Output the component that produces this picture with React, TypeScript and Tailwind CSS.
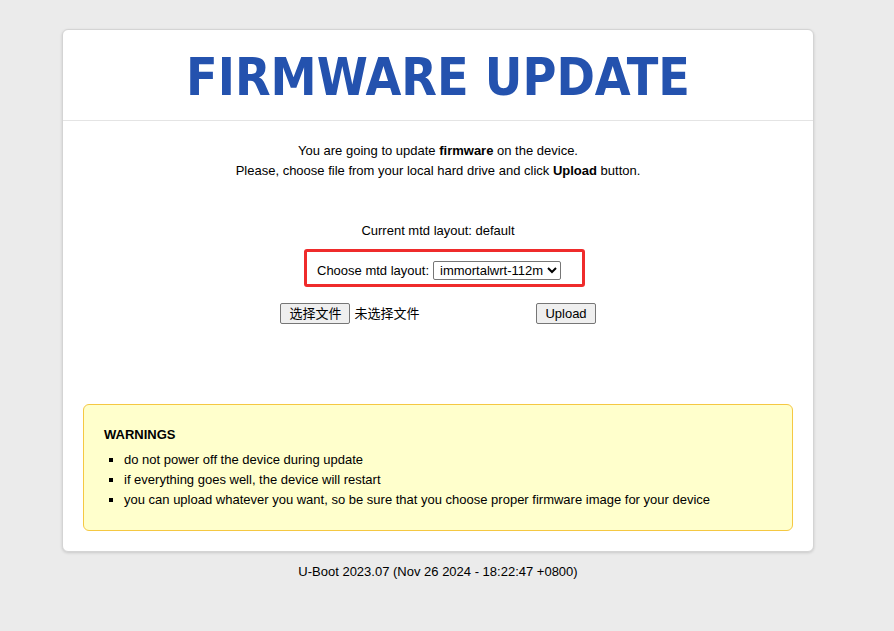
export default function App() {
  return (
    <div className="min-h-screen bg-[#ebebeb] pt-[29px] font-['Liberation_Sans','Noto_Sans_CJK_SC',sans-serif] text-[13px] text-black">
      <div className="flex w-[876px] flex-col items-center">
        {/* main card */}
        <div className="w-[752px] rounded-[6px] border border-[#d4d4d4] bg-white shadow-[0_1px_3px_rgba(0,0,0,0.15)]">
          <div className="flex h-[91px] items-center justify-center border-b border-[#e4e4e4]">
            <h1 className="pt-[5px] font-['DejaVu_Sans_Condensed','DejaVu_Sans',sans-serif] text-[51.5px] leading-none font-bold text-[#2452ae]">
              FIRMWARE UPDATE
            </h1>
          </div>

          <div className="px-[20px] pt-[20px] pb-[20px]">
            <div className="text-center leading-[20px]">
              <p>
                You are going to update <b>firmware</b> on the device.
              </p>
              <p>
                Please, choose file from your local hard drive and click <b>Upload</b> button.
              </p>
            </div>

            <p className="mt-[40px] text-center leading-[20px]">Current mtd layout: default</p>

            <div className="mt-[8px] flex justify-center pl-[13px]">
              <div className="flex h-[38px] w-[281px] items-center rounded-[3px] border-[3px] border-[#ef2b2b] pt-[5px] pl-[10px]">
                <span>Choose mtd layout:</span>
                <select className="ml-[4px] h-[19px] w-[128px] rounded-[2px] border border-[#767676] bg-white pl-[2px] text-[13px]">
                  <option>immortalwrt-112m</option>
                </select>
              </div>
            </div>

            <div className="mt-[16px] flex justify-center">
              <div className="flex w-[256px] items-center">
                <button className="h-[21px] rounded-[2px] border border-[#767676] bg-[#efefef] px-[8px] text-[13px]">
                  选择文件
                </button>
                <span className="ml-[4px]">未选择文件</span>
              </div>
              <button className="h-[21px] rounded-[2px] border border-[#767676] bg-[#efefef] px-[8px] text-[13px]">
                Upload
              </button>
            </div>

            {/* warnings */}
            <div className="mt-[80px] h-[127px] rounded-[6px] border border-[#f5c842] bg-[#ffffcc] px-[20px] pt-[20px]">
              <p className="font-bold leading-[20px]">WARNINGS</p>
              <ul className="mt-[5px] list-[square] pl-[20px] leading-[20px]">
                <li>do not power off the device during update</li>
                <li>if everything goes well, the device will restart</li>
                <li>you can upload whatever you want, so be sure that you choose proper firmware image for your device</li>
              </ul>
            </div>
          </div>
        </div>

        <p className="mt-[10px] leading-[20px]">U-Boot 2023.07 (Nov 26 2024 - 18:22:47 +0800)</p>
      </div>
    </div>
  );
}
